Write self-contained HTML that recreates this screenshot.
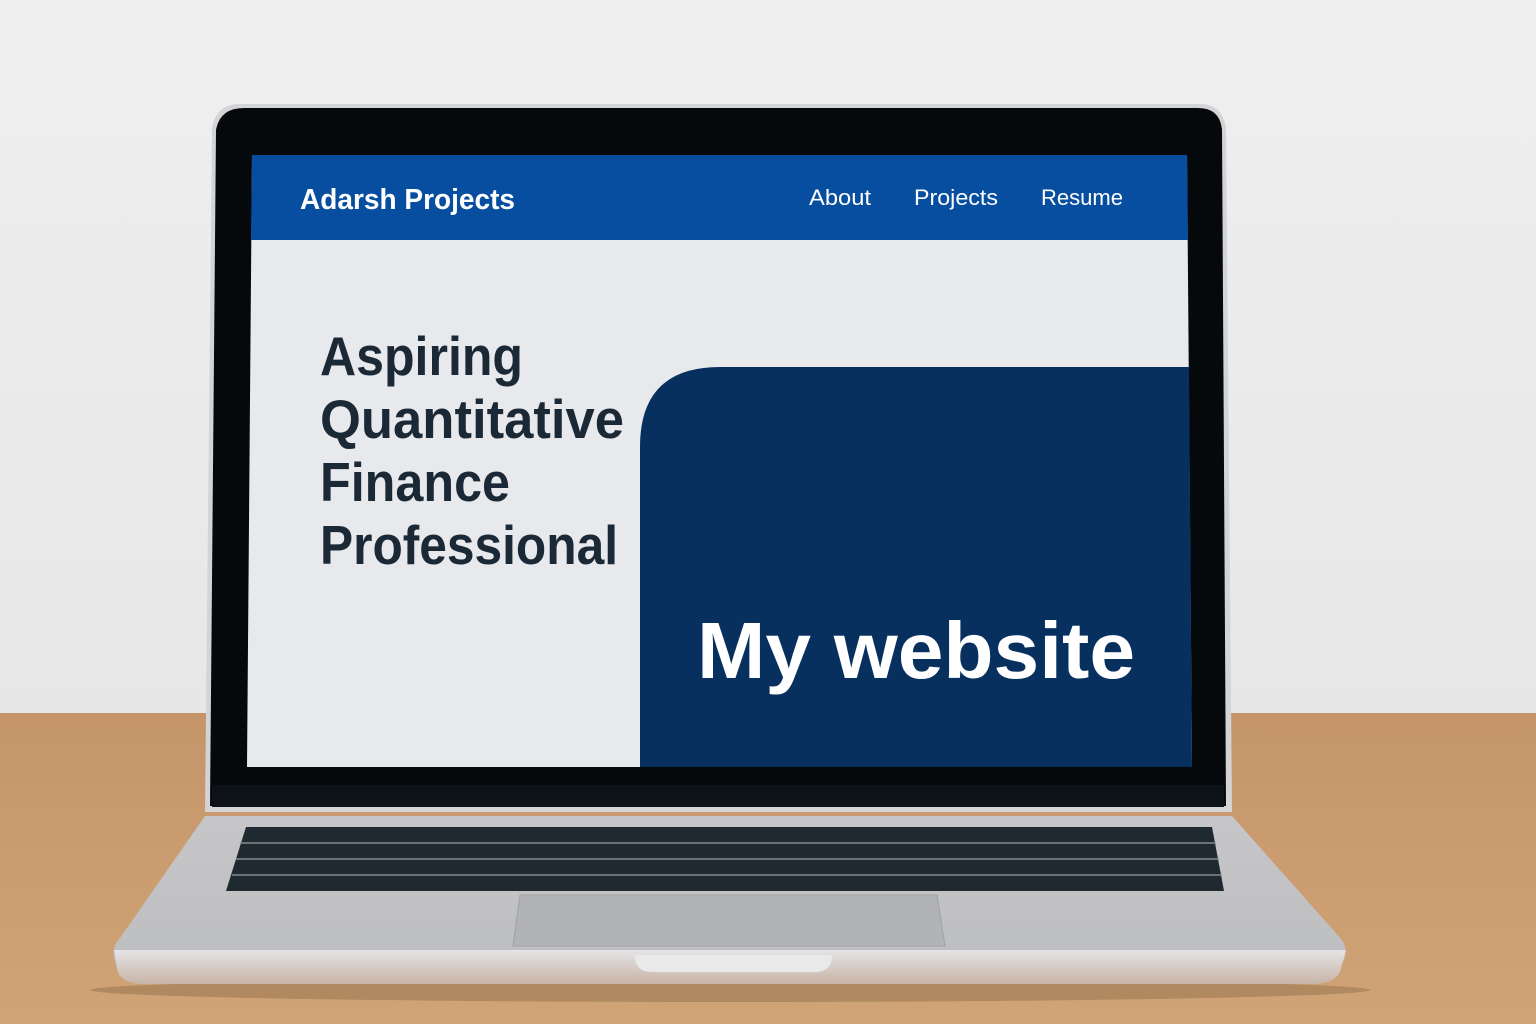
<!DOCTYPE html>
<html><head><meta charset="utf-8"><style>
html,body{margin:0;padding:0}
body{width:1536px;height:1024px;overflow:hidden;font-family:"Liberation Sans",sans-serif}
svg{display:block}
</style></head><body>
<svg width="1536" height="1024" viewBox="0 0 1536 1024" xmlns="http://www.w3.org/2000/svg">
<defs>
<linearGradient id="wall" x1="0" y1="0" x2="0" y2="1"><stop offset="0" stop-color="#efefef"/><stop offset="1" stop-color="#e7e7e7"/></linearGradient>
<linearGradient id="desk" x1="0" y1="0" x2="0" y2="1"><stop offset="0" stop-color="#c5956a"/><stop offset="1" stop-color="#d0a477"/></linearGradient>
<linearGradient id="base" x1="0" y1="0" x2="0" y2="1"><stop offset="0" stop-color="#c6c6c8"/><stop offset="1" stop-color="#bcbdbf"/></linearGradient>
<linearGradient id="edge" x1="0" y1="0" x2="0" y2="1"><stop offset="0" stop-color="#e4e4e6"/><stop offset="1" stop-color="#c8b4a6"/></linearGradient>
</defs>
<rect width="1536" height="713" fill="url(#wall)"/>
<rect y="713" width="1536" height="311" fill="url(#desk)"/>
<ellipse cx="730" cy="990" rx="640" ry="12" fill="#8a6a4a" opacity="0.45"/>
<!-- lid -->
<path d="M240 104 H1200 Q1222 104 1226 128 L1232 812 H205 L212 128 Q216 104 240 104Z" fill="#d4d4d6"/>
<path d="M244 108 H1198 Q1220 108 1222 130 L1226 806 H210 L216 130 Q220 108 244 108Z" fill="#05090c"/>
<rect x="212" y="785" width="1012" height="22" fill="#0c1218"/>
<!-- screen -->
<path d="M252 155 H1187 L1192 767 H247Z" fill="#e8e9ec"/>
<path d="M252 155 H1187 L1188 240 H251Z" fill="#074ea0"/>
<path d="M720 367 H1189 L1192 767 H640 V447 Q640 367 720 367Z" fill="#07305f"/>
<text x="300" y="209" fill="#fff" font-size="29" font-weight="bold" textLength="215" lengthAdjust="spacingAndGlyphs">Adarsh Projects</text>
<text x="809" y="205" fill="#fff" font-size="22" textLength="62" lengthAdjust="spacingAndGlyphs">About</text>
<text x="914" y="205" fill="#fff" font-size="22" textLength="84" lengthAdjust="spacingAndGlyphs">Projects</text>
<text x="1041" y="205" fill="#fff" font-size="22" textLength="82" lengthAdjust="spacingAndGlyphs">Resume</text>
<g fill="#1b2936" font-size="55" font-weight="bold">
<text x="320" y="375" textLength="203" lengthAdjust="spacingAndGlyphs">Aspiring</text>
<text x="320" y="438" textLength="304" lengthAdjust="spacingAndGlyphs">Quantitative</text>
<text x="320" y="501" textLength="190" lengthAdjust="spacingAndGlyphs">Finance</text>
<text x="320" y="564" textLength="298" lengthAdjust="spacingAndGlyphs">Professional</text>
</g>
<text x="697" y="678" fill="#fff" font-size="80" font-weight="bold" textLength="438" lengthAdjust="spacingAndGlyphs">My website</text>
<!-- base -->
<path d="M205 816 H1232 L1342 940 Q1348 950 1344 960 L1335 975 Q1330 984 1310 984 H145 Q122 984 118 972 L114 958 Q112 946 120 938Z" fill="url(#base)"/>
<path d="M114 950 H1346 L1340 972 Q1334 984 1312 984 H145 Q122 984 118 972Z" fill="url(#edge)"/>
<path d="M635 955 H832 Q832 972 815 972 H652 Q635 972 635 955Z" fill="#e9e9ea"/>
<path d="M246 827 H1212 L1224 891 H226Z" fill="#1f2a30"/>
<g stroke="#8c9294" stroke-width="2" opacity="0.7">
<line x1="240" y1="843" x2="1216" y2="843"/>
<line x1="236" y1="859" x2="1219" y2="859"/>
<line x1="232" y1="875" x2="1222" y2="875"/>
</g>
<path d="M520 895 H937 L945 946 H513Z" fill="#b2b3b5" stroke="#a0a1a3" stroke-width="1"/>
</svg>
</body></html>
